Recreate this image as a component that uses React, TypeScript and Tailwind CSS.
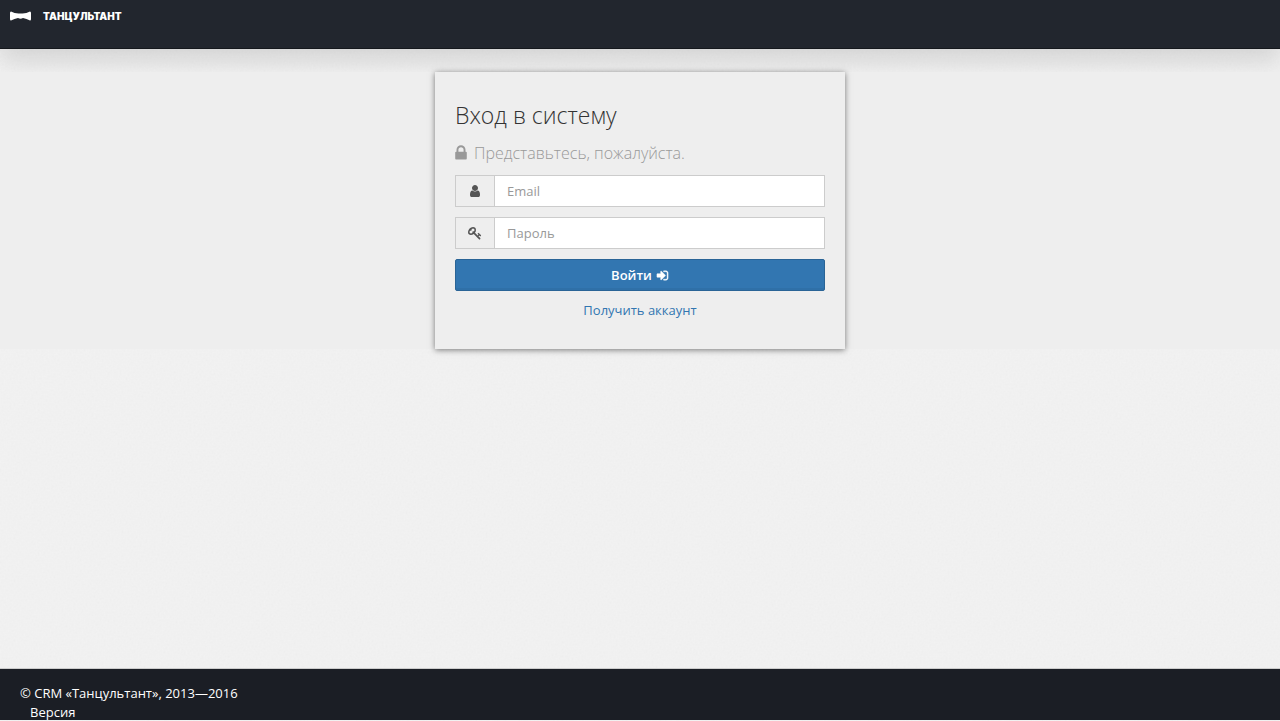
import React from "react";

type IconProps = { d: string; className?: string };

function Icon({ d, className = "" }: IconProps) {
  return (
    <svg viewBox="0 0 1792 1792" fill="currentColor" aria-hidden="true" className={className}>
      <path d={d} />
    </svg>
  );
}

const LOCK =
  "M640 768h512v-192q0-106-75-181t-181-75-181 75-75 181v192zm832 96v576q0 40-28 68t-68 28h-960q-40 0-68-28t-28-68v-576q0-40 28-68t68-28h32v-192q0-184 132-316t316-132 316 132 132 316v192h32q40 0 68 28t28 68z";
const USER =
  "M1536 1399q0 109-62.5 187t-150.5 78h-854q-88 0-150.5-78t-62.5-187q0-85 8.5-160.5t31.5-152 58.5-131 94-89 134.5-34.5q131 128 313 128t313-128q76 0 134.5 34.5t94 89 58.5 131 31.5 152 8.5 160.5zm-256-887q0 159-112.5 271.5t-271.5 112.5-271.5-112.5-112.5-271.5 112.5-271.5 271.5-112.5 271.5 112.5 112.5 271.5z";
const KEY =
  "M832 512q0-80-56-136t-136-56-136 56-56 136q0 42 19 83-41-19-83-19-80 0-136 56t-56 136 56 136 136 56 136-56 56-136q0-42-19-83 41 19 83 19 80 0 136-56t56-136zm851 704q0 17-49 66t-66 49q-9 0-28.5-16t-36.5-33-38.5-40-24.5-26l-96 96 220 220q28 28 28 68 0 42-39 81t-81 39q-40 0-68-28l-671-671q-176 131-365 131-163 0-265.5-102.5t-102.5-265.5q0-160 95-313t248-248 313-95q163 0 265.5 102.5t102.5 265.5q0 189-131 365l355 355 96-96q-3-3-26-24.5t-40-38.5-33-36.5-16-28.5q0-17 49-66t66-49q13 0 23 10 6 6 46 44.5t82 79.5 86.5 86 73 78 28.5 41z";
const SIGN_IN =
  "M1312 896q0 26-19 45l-544 544q-19 19-45 19t-45-19-19-45v-288h-448q-26 0-45-19t-19-45v-384q0-26 19-45t45-19h448v-288q0-26 19-45t45-19 45 19l544 544q19 19 19 45zm352-352v704q0 119-84.5 203.5t-203.5 84.5h-320q-13 0-22.5-9.5t-9.5-22.5q0-4-1-20t-.5-26.5 3-23.5 10-19.5 20.5-6.5h320q66 0 113-47t47-113v-704q0-66-47-113t-113-47h-312l-11.5-1-11.5-3-8-5.5-7-9-2-13.5q0-4-1-20t-.5-26.5 3-23.5 10-19.5 20.5-6.5h320q119 0 203.5 84.5t84.5 203.5z";

function PaperGrain() {
  return (
    <svg aria-hidden="true" className="pointer-events-none absolute inset-0 h-full w-full opacity-5">
      <filter id="grain">
        <feTurbulence type="fractalNoise" baseFrequency="0.5" numOctaves="2" />
        <feColorMatrix type="saturate" values="0" />
      </filter>
      <rect width="100%" height="100%" filter="url(#grain)" />
    </svg>
  );
}

type FieldProps = { id: string; label: string; type: string; icon: string };

function Field({ id, label, type, icon }: FieldProps) {
  return (
    <div className="flex h-8 border border-[#cccccc]">
      <label htmlFor={id} aria-label={label} className="flex w-[39px] shrink-0 items-center justify-center border-r border-[#cccccc] text-[#555555]">
        <Icon d={icon} className="size-[14px]" />
      </label>
      <input
        id={id}
        type={type}
        placeholder={label}
        className="min-w-0 flex-1 bg-white px-3 text-[13px] text-[#555555] outline-none placeholder:text-[#999999]"
      />
    </div>
  );
}

export default function App() {
  return (
    <div className="relative isolate flex min-h-screen flex-col bg-[#f2f2f2] pb-px font-['Open_Sans','Noto_Sans',sans-serif] text-[13px] leading-[19px] text-[#333333]">
      <header className="h-[49px] border-b border-[#15181d] bg-[#22262e] px-[10px] pt-[6px] shadow-[0_12px_24px_0_rgba(0,0,0,0.12)]">
        <a href="#" className="inline-flex h-5 items-center gap-3 text-white">
          <svg viewBox="0 0 42 20" fill="currentColor" aria-hidden="true" className="h-[10px] w-[21px]">
            <path d="M2 1Q9 5 17 5H25Q33 5 40 1Q42 1 42 4V16Q42 19 40 19Q33 15 26 14Q21 17 16 14Q9 15 2 19Q0 19 0 16V4Q0 1 2 1Z" />
          </svg>
          <span className="font-['Inter','Open_Sans',sans-serif] text-[10px] font-black">ТАНЦУЛЬТАНТ</span>
        </a>
      </header>

      <main className="flex flex-1 flex-col pt-[23px]">
        <div className="relative z-10 flex justify-center bg-[#eeeeee]">
          <form className="flex w-full max-w-[410px] flex-col gap-[10px] bg-[#eeeeee] px-5 pt-[27px] pb-[29px] shadow-[0_1px_6px_0_rgba(0,0,0,0.5)]">
            <div>
              <h1 className="text-[23px] leading-8 font-light">Вход в систему</h1>
              <h2 className="mt-[10px] flex items-center gap-1 text-[16px] leading-6 font-light text-[#999999]">
                <Icon d={LOCK} className="-ml-[3px] size-[18px]" />
                Представьтесь, пожалуйста.
              </h2>
            </div>
            <Field id="email" label="Email" type="email" icon={USER} />
            <Field id="password" label="Пароль" type="password" icon={KEY} />
            <button
              type="button"
              className="flex h-8 items-center justify-center gap-1 rounded-[2px] border border-[#2a6496] bg-[#3276b1] font-semibold text-white shadow-[inset_0_-2px_0_rgba(0,0,0,0.05)]"
            >
              Войти
              <Icon d={SIGN_IN} className="size-[13px] stroke-current stroke-[60]" />
            </button>
            <a href="#" className="self-center text-[#3276b1]">Получить аккаунт</a>
          </form>
        </div>
        <div className="absolute inset-0 -z-10">
          <PaperGrain />
        </div>
      </main>

      <footer className="h-[52px] overflow-hidden border-t border-[#cccccc] bg-[#1b1e25] px-5 pt-[15px] text-white">
        <p>© CRM «Танцультант», 2013—2016</p>
        <p className="pl-[10px]">Версия</p>
      </footer>
    </div>
  );
}
